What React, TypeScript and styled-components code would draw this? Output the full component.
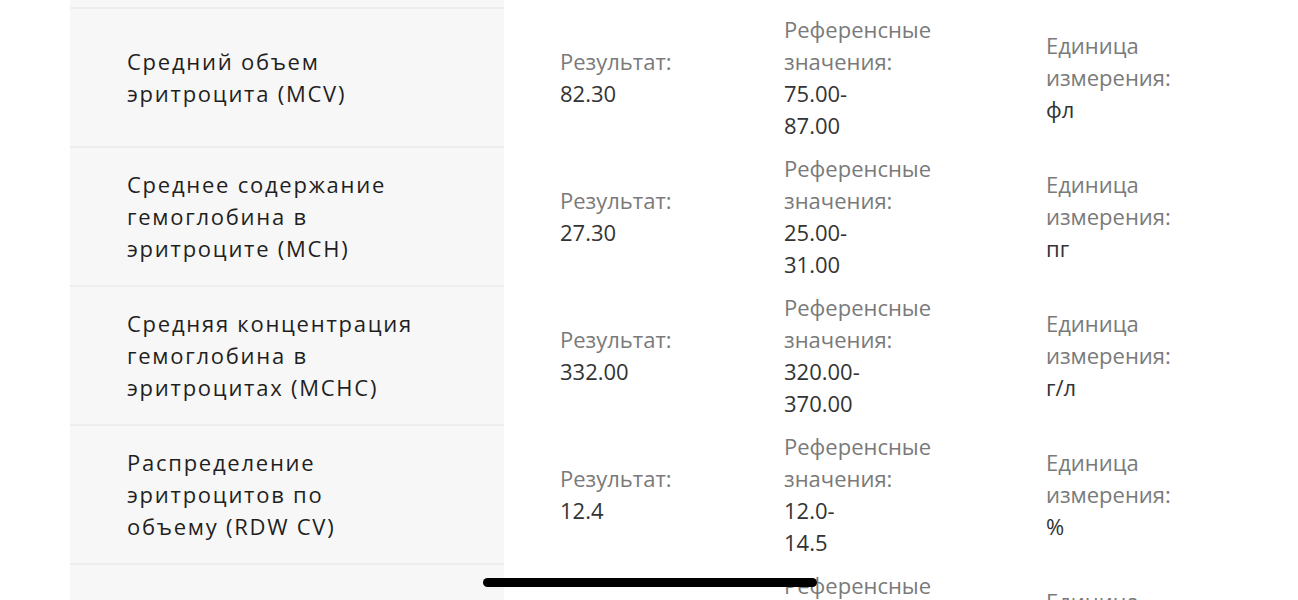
import React from "react";
import styled, { createGlobalStyle } from "styled-components";

const Global = createGlobalStyle`
  html, body { margin: 0; padding: 0; background: #ffffff; overflow: hidden; }
  body { font-family: "Open Sans", "Noto Sans", sans-serif; }
`;

const Page = styled.div`
  height: 600px;
  overflow: hidden;
  position: relative;
`;

const List = styled.div`
  margin-top: -130px;
  display: flex;
  flex-direction: column;
`;

const Row = styled.div`
  display: grid;
  grid-template-columns: 434px 280px 262px 1fr;
  margin-left: 70px;
  height: 139px;
`;

const NameCell = styled.div`
  background: #f7f7f7;
  border-bottom: 2px solid #ededed;
  padding-left: 57px;
  padding-right: 89px;
  padding-bottom: 2px;
  display: flex;
  align-items: center;
  font-size: 22px;
  line-height: 32px;
  letter-spacing: 1.75px;
  color: #1f1f1f;
`;

const Cell = styled.div<{ $pad?: number }>`
  display: flex;
  align-items: center;
  padding-left: ${(p) => p.$pad ?? 0}px;
  padding-bottom: 4px;
`;

const Stack = styled.div`
  width: 80px;
  font-size: 22px;
  line-height: 32px;
  white-space: normal;
`;

const Label = styled.div`
  color: #7a7a7a;
`;

const Value = styled.div`
  color: #333333;
`;

const HomeBar = styled.div`
  position: fixed;
  left: 483px;
  top: 578px;
  width: 334px;
  height: 9px;
  border-radius: 5px;
  background: #000;
`;

type Item = { name: string; result: string; ref: string; unit: string };

const items: Item[] = [
  { name: "Гематокрит (HCT)", result: "41.20", ref: "36.00-48.00", unit: "%" },
  { name: "Средний объем эритроцита (MCV)", result: "82.30", ref: "75.00-87.00", unit: "фл" },
  { name: "Среднее содержание гемоглобина в эритроците (MCH)", result: "27.30", ref: "25.00-31.00", unit: "пг" },
  { name: "Средняя концентрация гемоглобина в эритроцитах (MCHC)", result: "332.00", ref: "320.00-370.00", unit: "г/л" },
  { name: "Распределение эритроцитов по объему (RDW CV)", result: "12.4", ref: "12.0-14.5", unit: "%" },
  { name: "Тромбоциты (PLT)", result: "254.00", ref: "180.00-320.00", unit: "10^9/л" },
];

export default function App() {
  return (
    <Page>
      <Global />
      <List>
        {items.map((it, i) => (
          <Row key={i}>
            <NameCell>{it.name}</NameCell>
            <Cell $pad={56}>
              <Stack>
                <Label>Результат:</Label>
                <Value>{it.result}</Value>
              </Stack>
            </Cell>
            <Cell>
              <Stack>
                <Label>Референсные значения:</Label>
                <Value>{it.ref}</Value>
              </Stack>
            </Cell>
            <Cell>
              <Stack>
                <Label>Единица измерения:</Label>
                <Value>{it.unit}</Value>
              </Stack>
            </Cell>
          </Row>
        ))}
      </List>
      <HomeBar />
    </Page>
  );
}
